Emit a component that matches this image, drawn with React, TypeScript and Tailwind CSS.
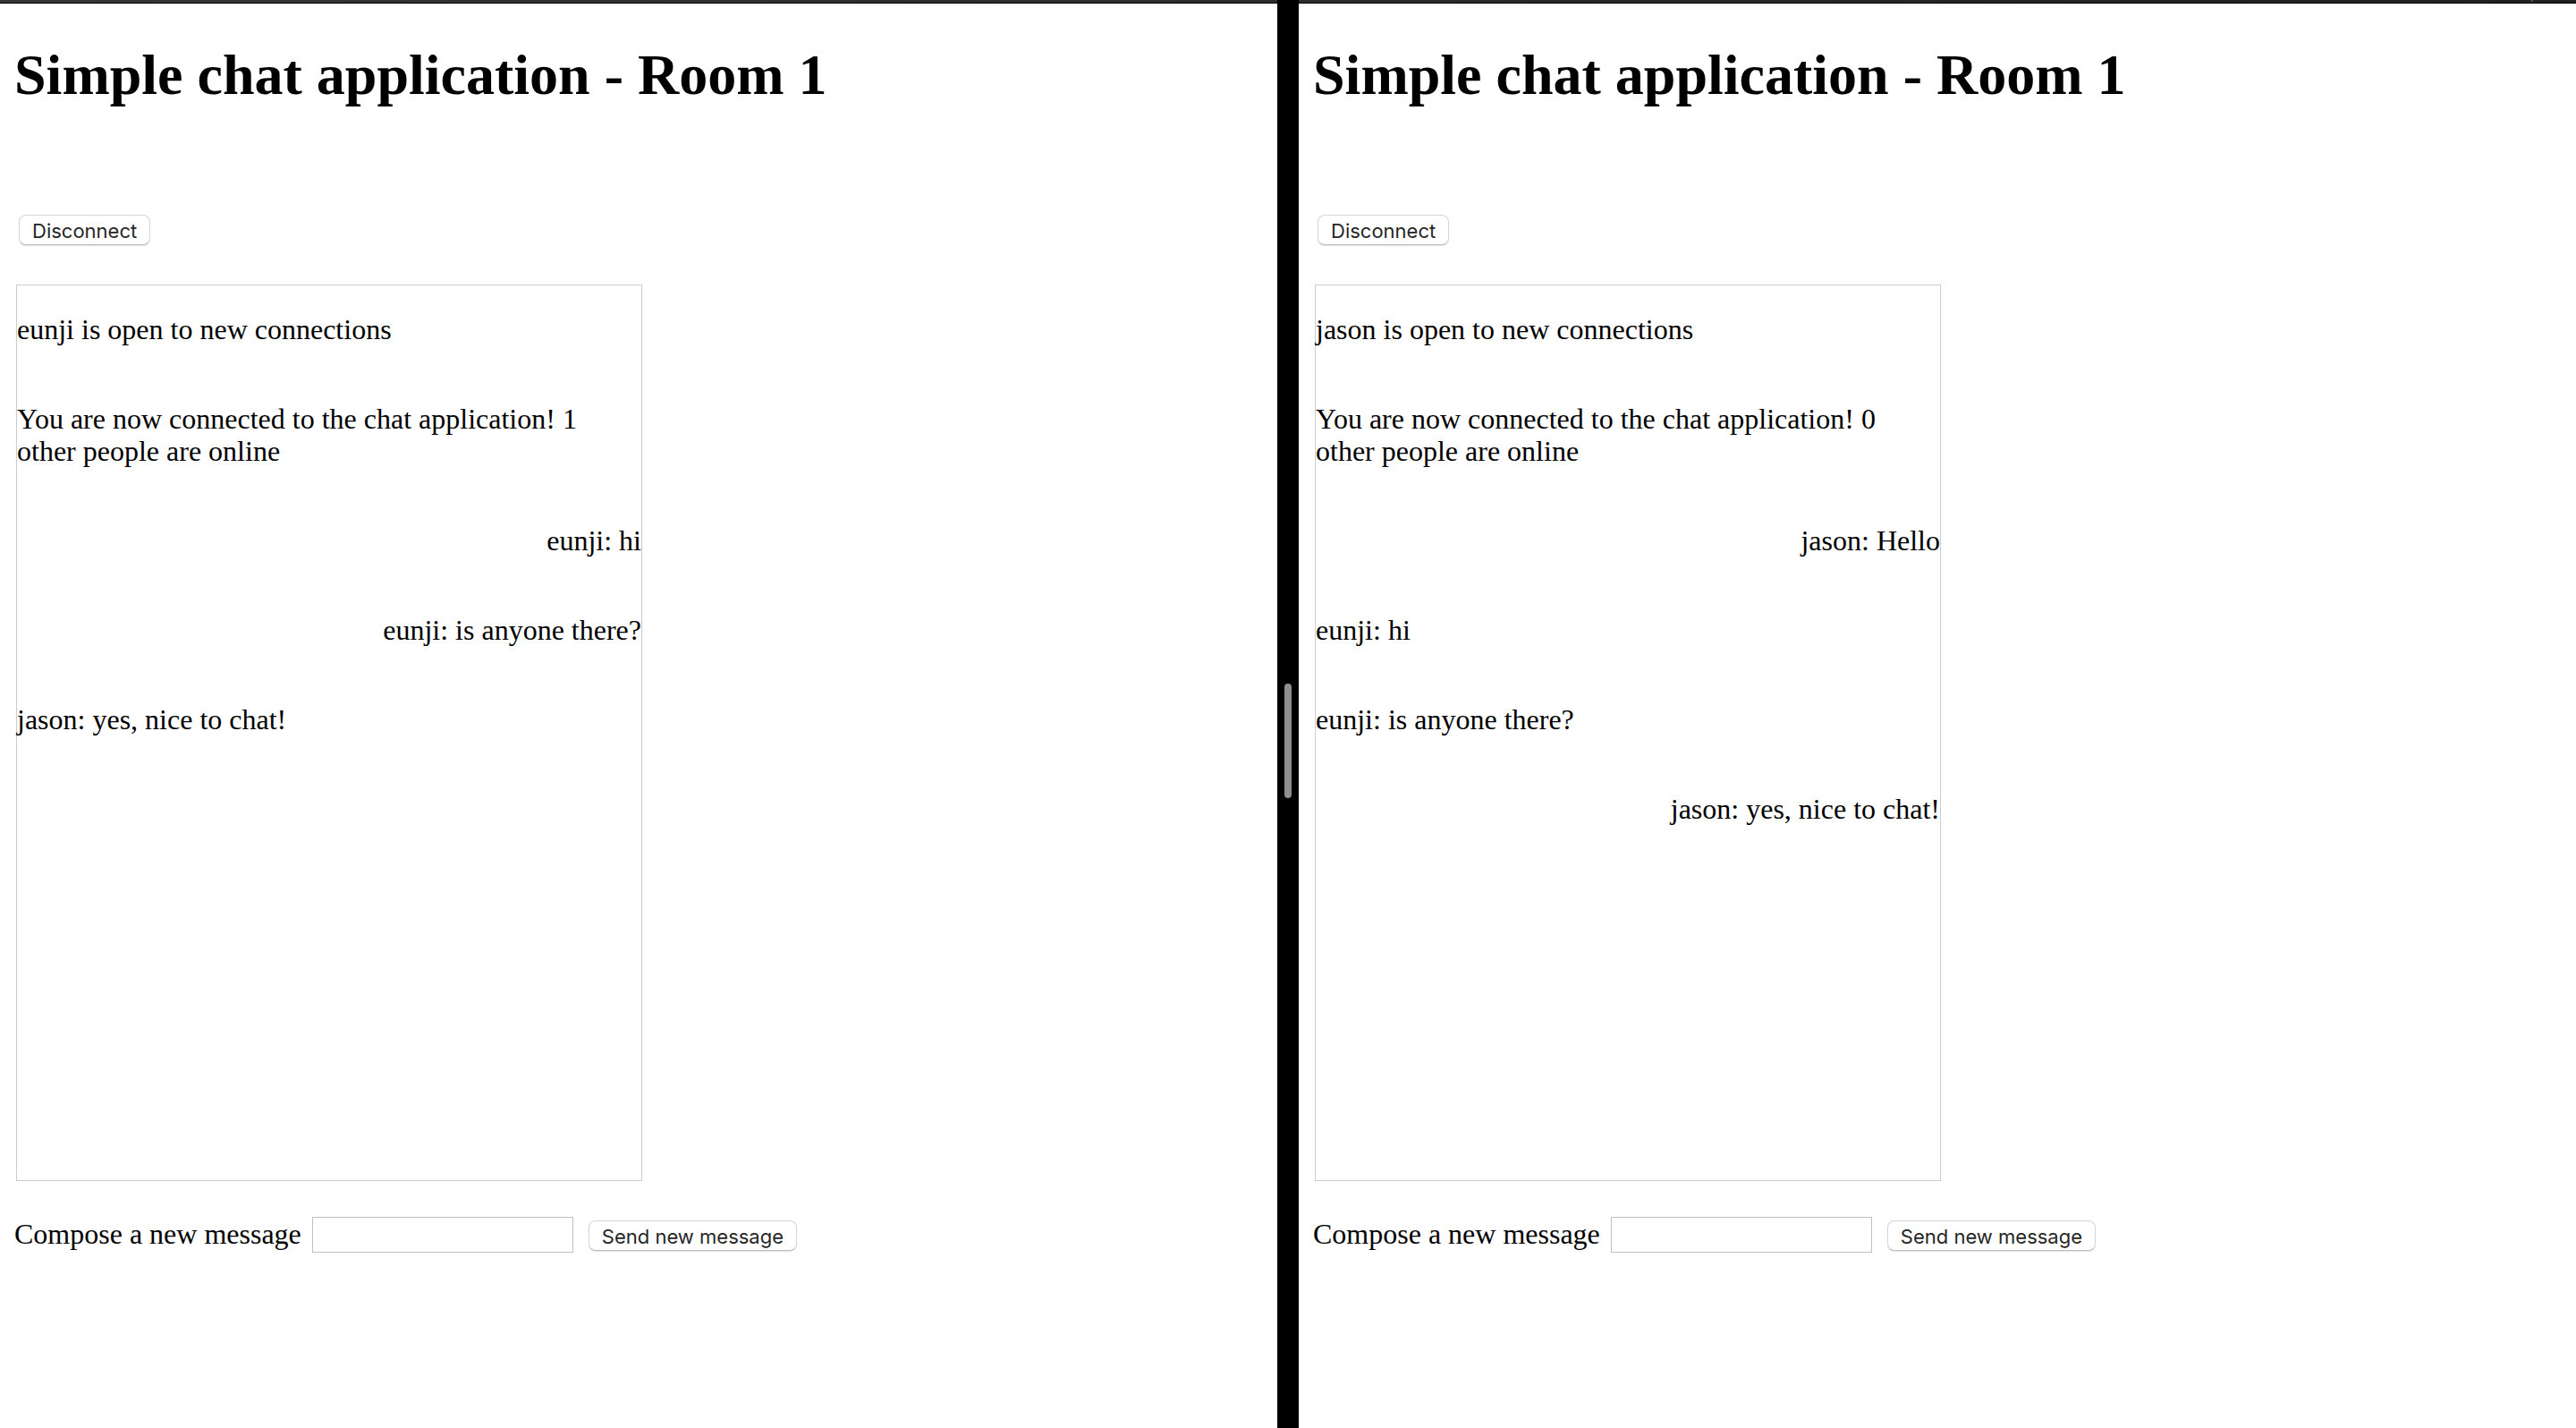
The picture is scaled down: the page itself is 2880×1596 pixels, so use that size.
import { useId } from "react";

type Message = { text: string; own?: boolean };

const eunjiMessages: Message[] = [
  { text: "eunji is open to new connections" },
  { text: "You are now connected to the chat application! 1 other people are online" },
  { text: "eunji: hi", own: true },
  { text: "eunji: is anyone there?", own: true },
  { text: "jason: yes, nice to chat!" },
];

const jasonMessages: Message[] = [
  { text: "jason is open to new connections" },
  { text: "You are now connected to the chat application! 0 other people are online" },
  { text: "jason: Hello", own: true },
  { text: "eunji: hi" },
  { text: "eunji: is anyone there?" },
  { text: "jason: yes, nice to chat!", own: true },
];

function PushButton({ children }: { children: string }) {
  return (
    <button
      type="button"
      className="h-[34px] rounded-lg border border-[#d6d6d6] border-b-[#bdbdbd] bg-white px-[14px] pt-0.5 font-['Inter',sans-serif] text-[22px] leading-[30px] whitespace-nowrap text-[#262626] shadow-[0_1px_1px_rgba(0,0,0,0.12)]"
    >
      {children}
    </button>
  );
}

function ChatPane({ messages, dimmed = false }: { messages: Message[]; dimmed?: boolean }) {
  const inputId = useId();
  return (
    <section className="flex min-w-0 flex-1 flex-col">
      <div
        className={
          dimmed
            ? "flex h-1 shrink-0 justify-end border-b border-black bg-linear-to-r from-[#2c2c2c] to-[#202020] pr-12"
            : "h-1 shrink-0 border-b border-black bg-linear-to-r from-[#363636] to-[#2c2c2c]"
        }
      >
        {dimmed && <span className="h-0.5 w-0.5 bg-[#555555]" />}
      </div>
      <div className="px-4 pt-11">
        <h1 className="text-[64px] leading-[72px] font-bold">Simple chat application - Room 1</h1>
        <div className="mt-[120px] flex pl-[5px]">
          <PushButton>Disconnect</PushButton>
        </div>
        <div className="mt-11 ml-0.5 h-[1002px] max-w-[700px] border border-[#cccccc]">
          <div className="-mt-px">
            {messages.map((message) => (
              <p key={message.text} className={message.own ? "py-8 text-right" : "py-8"}>
                {message.text}
              </p>
            ))}
          </div>
        </div>
        <form className="mt-10 flex items-center" onSubmit={(event) => event.preventDefault()}>
          <label htmlFor={inputId} className="pb-0.5">
            Compose a new message
          </label>
          <input
            id={inputId}
            type="text"
            className="ml-3 h-10 w-[292px] border border-[#c0c0c0] bg-white px-1 text-[22px] outline-none"
          />
          <div className="ml-[17px] flex pt-0.5">
            <PushButton>Send new message</PushButton>
          </div>
        </form>
      </div>
    </section>
  );
}

export default function App() {
  return (
    <main className="flex min-h-screen bg-white font-['Liberation_Serif',serif] text-[32px] leading-[36px] text-black">
      <ChatPane messages={eunjiMessages} />
      <div className="flex w-6 shrink-0 items-center justify-center bg-black pt-[60px]">
        <div className="h-32 w-2 rounded-full bg-[#8e8e8e]" />
      </div>
      <ChatPane messages={jasonMessages} dimmed />
    </main>
  );
}
